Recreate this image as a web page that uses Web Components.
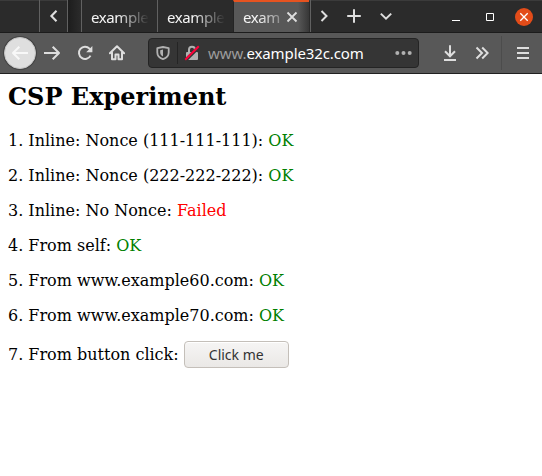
<!DOCTYPE html>
<html lang="en">
<head>
<meta charset="utf-8">
<title>CSP Experiment</title>
<style>
html,body{margin:0;height:100%;background:#fff;overflow:hidden}
</style>
</head>
<body>
<browser-window></browser-window>
<script>
const define = (name, html, setup) => customElements.define(name, class extends HTMLElement {
  connectedCallback() {
    if (this.shadowRoot) return;
    const root = this.attachShadow({mode: 'open'});
    root.innerHTML = html;
    if (setup) setup(this, root);
  }
});

const icons = {
  left: [16, '<path d="M10.5 2.8L5.4 8l5.1 5.2" stroke-width="2.1"/>'],
  right: [16, '<path d="M5.5 3L10.5 8l-5 5" stroke-width="2"/>'],
  down: [16, '<path d="M2.8 5.6L8 10.7l5.2-5.1" stroke-width="2"/>'],
  plus: [16, '<path d="M8 1.2v13.6M1.2 8h13.6" stroke-width="2"/>'],
  close: [12, '<path d="M1.5 1.5l9 9M10.5 1.5l-9 9" stroke-width="1.8"/>'],
  back: [18, '<path d="M17 9H2.2M8.3 2.7L2 9l6.3 6.3" stroke-width="2" stroke-linejoin="round"/>'],
  forward: [18, '<path d="M1 9h14.8M9.7 2.7L16 9l-6.3 6.3" stroke-width="2" stroke-linejoin="round"/>'],
  reload: [16, '<path d="M13.5 10.6A6.1 6.1 0 1 1 12.5 3.6L14 5.6" stroke-width="2"/><path d="M15.4 1v6.2H9.2z" fill="currentColor" stroke="none"/>'],
  home: [16, '<path d="M.9 8.3L8 1.3l7.1 7M3 7.4v6.8h3.5V9.5h3v4.7H13V7.4" stroke-width="2" stroke-linejoin="round" stroke-linecap="round"/><path d="M6.7 9.5h2.6" stroke-width="1"/>'],
  shield: [14, '<path d="M7 1L1.3 2.2v4.3c0 3 2 5.4 5.7 6.6 3.7-1.2 5.7-3.6 5.7-6.6V2.2z" stroke-width="1.8" stroke-linejoin="round"/><path d="M7 3.5v7c-2-.9-2.8-2.200-2.800-4V4.200z" fill="currentColor" stroke="none"/>'],
  lock: [16, '<path d="M5 7.500V4.800a3 3 0 0 1 6 0v2.700" stroke-width="2"/><rect x="2" y="7" width="12" height="8" rx="1" fill="currentColor" stroke="none"/><path d="M1.200 15.600L14.800 2" stroke="#353535" stroke-width="3.400"/><path d="M1.200 14.800L14.800 1.200" stroke="#ff0039" stroke-width="2"/>'],
  dots: [17, '<g fill="currentColor" stroke="none"><circle cx="2.300" cy="8" r="2"/><circle cx="8.500" cy="8" r="2"/><circle cx="14.700" cy="8" r="2"/></g>'],
  download: [16, '<path d="M8 .2v11M3 6.300l5 5 5-5M2 15h12" stroke-width="2"/>'],
  more: [14, '<path d="M1.500 1.500L7 7l-5.500 5.500M7.200 1.500L12.700 7l-5.500 5.500" stroke-width="2"/>'],
  menu: [14, '<path d="M1 2h12M1 7h12M1 12h12" stroke-width="2"/>'],
  minimize: [8, '<path d="M0 7.500h8" stroke-width="1"/>'],
  maximize: [8, '<path d="M.5.5h7v7h-7z" stroke-width="1"/>'],
  windowclose: [18, '<circle cx="9" cy="9" r="9" fill="#e34c19" stroke="none"/><path d="M5.300 5.300l7.400 7.400M12.700 5.300l-7.400 7.400" stroke="#fff" stroke-width="1.300"/>']
};
define('ui-icon', '<style>:host{display:block;flex:none;color:#dedede}svg{display:block}</style>', (el, root) => {
  const [size, body] = icons[el.getAttribute('name')];
  root.innerHTML += `<svg width="${size}" height="${size}" viewBox="0 0 ${size} ${size}" fill="none" stroke="currentColor">${body}</svg>`;
});

define('browser-tab', `<style>
:host{display:flex;box-sizing:border-box;width:76px;height:32px;flex:none;border-left:1px solid #616161;padding:2px 8px 0 9px;align-items:center;font:15px/20px "Noto Sans",sans-serif;color:#f5f5f5;background:#2b2b2b}
:host([active]){border-left-color:#242424;background:linear-gradient(90deg,#585858 64px,#343434 76px);padding:0 11px 0 9px;border-top:2px solid #e65320}
.label{width:58px;flex:none;white-space:nowrap;letter-spacing:-.4px;-webkit-mask-image:linear-gradient(90deg,#000 45%,transparent)}
:host([active]) .label{width:42px;-webkit-mask-image:linear-gradient(90deg,#000 35%,rgba(0,0,0,.2))}
ui-icon{display:none;margin-left:1px}:host([active]) ui-icon{display:block}
</style><span class="label"><slot></slot></span><ui-icon name="close"></ui-icon>`);

define('tab-strip', `<style>
:host{display:flex;height:32px;background:#2b2b2b;border-bottom:1px solid #1c1c1c;box-shadow:inset 0 1px #3b3b3b}
.spacer{width:39px}.scroll{box-sizing:border-box;width:29px;border-left:1px solid #616161;border-right:1px solid #616161;display:grid;place-items:center}
.shade{width:13px;background:linear-gradient(90deg,#1d1d1d,#2b2b2b)}
.actions{display:flex;flex:1;align-items:center;border-left:1px solid #616161;padding-left:5px;margin-left:1px}
.actions ui-icon+ui-icon{margin-left:14px}
.actions ui-icon[name=down]{margin-left:16px}
.controls{display:flex;align-items:center;gap:26px;padding:2px 9px 0 0}
.controls ui-icon{color:#fff}
.controls ui-icon[name=minimize]{margin-top:-1px}
.controls ui-icon[name=windowclose]{margin-left:-5px}
</style><div class="spacer"></div><div class="scroll"><ui-icon name="left"></ui-icon></div><div class="shade"></div>
<browser-tab>example</browser-tab><browser-tab>example</browser-tab><browser-tab active>exam</browser-tab>
<div class="actions"><ui-icon name="right"></ui-icon><ui-icon name="plus"></ui-icon><ui-icon name="down"></ui-icon></div>
<div class="controls"><ui-icon name="minimize"></ui-icon><ui-icon name="maximize"></ui-icon><ui-icon name="windowclose"></ui-icon></div>`);

define('address-bar', `<style>
:host{display:flex;flex:none;box-sizing:border-box;align-items:center;width:271px;height:30px;background:#353535;border:1px solid #242424;border-radius:4px;padding:0 6px 0 7px;color:#9c9c9c;font:15px/20px "Noto Sans",sans-serif}
ui-icon{color:#b1b1b1}.line{width:1px;height:22px;background:#242424;margin:0 6px 0 7px}
.url{flex:1;white-space:nowrap;margin-left:8px;letter-spacing:-.1px}.url b{font-weight:400;color:#fff}
</style><ui-icon name="shield"></ui-icon><i class="line"></i><ui-icon name="lock"></ui-icon><span class="url">www.<b>example32c.com</b></span><ui-icon name="dots"></ui-icon>`);

define('nav-toolbar', `<style>
:host{display:flex;align-items:center;height:40px;background:#585858;border-bottom:1px solid #202020;padding-left:4px}
.back{box-sizing:border-box;width:32px;height:32px;border-radius:50%;background:#dfdfdf;border:1px solid #c5c5c5;box-shadow:0 0 0 1px #454545;display:grid;place-items:center}
.back ui-icon{color:#f8f8f8}
.nav{display:flex;align-items:center;gap:16px;margin:0 23px 0 7px}
.sep{width:1px;height:34px;background:#4c4c4c;margin:0 14px 0 12px}
ui-icon[name=download]{margin-left:23px}ui-icon[name=more]{margin-left:17px}
</style><span class="back"><ui-icon name="back"></ui-icon></span><div class="nav"><ui-icon name="forward"></ui-icon><ui-icon name="reload"></ui-icon><ui-icon name="home"></ui-icon></div>
<address-bar></address-bar><ui-icon name="download"></ui-icon><ui-icon name="more"></ui-icon><i class="sep"></i><ui-icon name="menu"></ui-icon>`);

define('test-result', `<style>:host{display:block;height:19px;margin-bottom:16px;white-space:nowrap}
span{color:green}:host([status=Failed]) span{color:red}</style><slot></slot> <span></span>`, (el, root) => {
  root.querySelector('span').textContent = el.getAttribute('status');
});

define('push-button', `<style>
:host{display:block}
button{display:block;box-sizing:border-box;width:105px;height:27px;padding:1px 0 0;border:1px solid #c4bfb9;border-radius:4px;background:linear-gradient(#f6f5f4,#eae8e6);box-shadow:inset 0 1px #fff;color:#333;font:14px/20px "Noto Sans",sans-serif}
</style><button><slot></slot></button>`);

define('csp-page', `<style>
:host{display:block;padding:9px 8px 8px;color:#000;font:16px/19px "DejaVu Serif",serif}
h2{font-size:24px;line-height:28px;margin:0 0 20px}
.click{display:flex;align-items:center;height:27px;white-space:pre}
</style><h2>CSP Experiment</h2>
<test-result status="OK">1. Inline: Nonce (111-111-111):</test-result>
<test-result status="OK">2. Inline: Nonce (222-222-222):</test-result>
<test-result status="Failed">3. Inline: No Nonce:</test-result>
<test-result status="OK">4. From self:</test-result>
<test-result status="OK">5. From www.example60.com:</test-result>
<test-result status="OK">6. From www.example70.com:</test-result>
<div class="click"><span>7. From button click: </span><push-button>Click me</push-button></div>`);

define('browser-window', `<style>:host{display:block;width:542px;height:476px;overflow:hidden;background:#fff}</style>
<tab-strip></tab-strip><nav-toolbar></nav-toolbar><csp-page></csp-page>`);
</script>
</body>
</html>
